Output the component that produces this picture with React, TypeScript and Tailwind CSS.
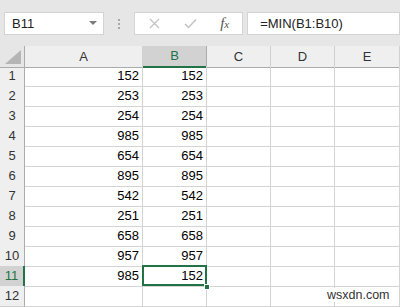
import React from "react";

const letters = ["A", "B", "C", "D", "E"];
const data = [
  [152, 152],
  [253, 253],
  [254, 254],
  [985, 985],
  [654, 654],
  [895, 895],
  [542, 542],
  [251, 251],
  [658, 658],
  [957, 957],
  [985, 152],
];

const font = { fontFamily: '"Liberation Sans", Arial, sans-serif' };

export default function App() {
  const gridCols = "grid grid-cols-[25px_118px_64px_64px_64px_65px]";
  const rows = Array.from({ length: 12 }, (_, i) => i + 1);
  return (
    <div className="w-[400px] h-[307px] overflow-hidden bg-white relative text-[#222]" style={font}>
      {/* toolbar */}
      <div className="h-[46px] bg-[#e6e6e6] flex items-start pt-[12px] pl-[4px]">
        <div className="w-[101px] h-[23px] bg-white border border-[#d4d4d4] flex items-center pl-[7px] pr-[6px] text-[13px]">
          <span className="flex-1">B11</span>
          <svg width="8" height="5" viewBox="0 0 8 5">
            <path d="M0 0 L8 0 L4 4 Z" fill="#7a7a7a" />
          </svg>
        </div>
        <div className="w-[31px] h-[23px] flex flex-col items-center justify-center gap-[2px]">
          <div className="w-[2px] h-[2px] bg-[#a8a8a8]" />
          <div className="w-[2px] h-[2px] bg-[#a8a8a8]" />
          <div className="w-[2px] h-[2px] bg-[#a8a8a8]" />
        </div>
        <div className="w-[109px] h-[23px] bg-white border border-[#d4d4d4] flex items-center">
          <div className="w-[38px] flex justify-center">
            <svg width="11" height="11" viewBox="0 0 11 11">
              <path d="M1 1 L10 10 M10 1 L1 10" stroke="#c2c2c2" strokeWidth="1.3" fill="none" />
            </svg>
          </div>
          <div className="w-[34px] flex justify-center">
            <svg width="13" height="11" viewBox="0 0 13 11">
              <path d="M1 6 L4.5 9.5 L12 1.5" stroke="#c2c2c2" strokeWidth="1.5" fill="none" />
            </svg>
          </div>
          <div className="w-[35px] flex justify-center items-baseline text-[#555]" style={{ fontFamily: '"Liberation Serif", "Times New Roman", serif' }}>
            <span className="italic text-[15px]">f</span>
            <span className="italic text-[11px]">x</span>
          </div>
        </div>
        <div className="ml-[4px] w-[155px] h-[23px] bg-white border border-[#d4d4d4] flex items-center pl-[12px] text-[13px]">
          =MIN(B1:B10)
        </div>
      </div>

      {/* header row */}
      <div className={`${gridCols} h-[20px]`}>
        <div className="bg-[#e6e6e6] border-r border-b border-[#ababab] relative">
          <svg className="absolute left-[5px] top-[4px]" width="16" height="14" viewBox="0 0 16 14">
            <path d="M16 0 L16 14 L0 14 Z" fill="#b5b5b5" />
          </svg>
        </div>
        {letters.map((l) => {
          const sel = l === "B";
          return (
            <div
              key={l}
              className={
                sel
                  ? "bg-[#d2d2d2] border-r border-[#ababab] border-b-2 border-b-[#217346] text-[#217346] flex items-center justify-center text-[13px]"
                  : "bg-[#efefef] border-r border-b border-[#d0d0d0] border-b-[#ababab] flex items-center justify-center text-[13px] text-[#333]"
              }
            >
              {l}
            </div>
          );
        })}
      </div>

      {rows.map((r) => {
        const vals = data[r - 1];
        const selRow = r === 11;
        return (
          <div key={r} className={`${gridCols} h-[20px]`}>
            <div
              className={
                selRow
                  ? "bg-[#d2d2d2] border-b border-[#ababab] border-r-2 border-r-[#217346] flex items-center justify-center text-[13px] text-[#217346]"
                  : "bg-[#efefef] border-b border-r border-[#d0d0d0] border-r-[#ababab] flex items-center justify-center text-[13px] text-[#333]"
              }
            >
              {r}
            </div>
            {letters.map((l, ci) => {
              const v = vals && ci < 2 ? vals[ci] : null;
              const isSel = selRow && ci === 1;
              return (
                <div
                  key={l}
                  className={`border-r border-b border-[#d4d4d4] relative flex items-center justify-end pr-[3px] text-[13px] text-black ${isSel ? "z-10" : ""}`}
                >
                  {v}
                  {isSel && (
                    <>
                      <div className="absolute -left-[1px] -top-[1px] w-[65px] h-[21px] border-2 border-[#217346]" />
                      <div className="absolute -right-[4px] -bottom-[4px] w-[6px] h-[6px] bg-[#217346] border border-white" />
                    </>
                  )}
                </div>
              );
            })}
          </div>
        );
      })}

      <div className="absolute left-[327px] top-[288px] text-[12.5px] text-[#333] bg-white leading-none pt-[1px] z-20">
        wsxdn.com
      </div>
    </div>
  );
}
